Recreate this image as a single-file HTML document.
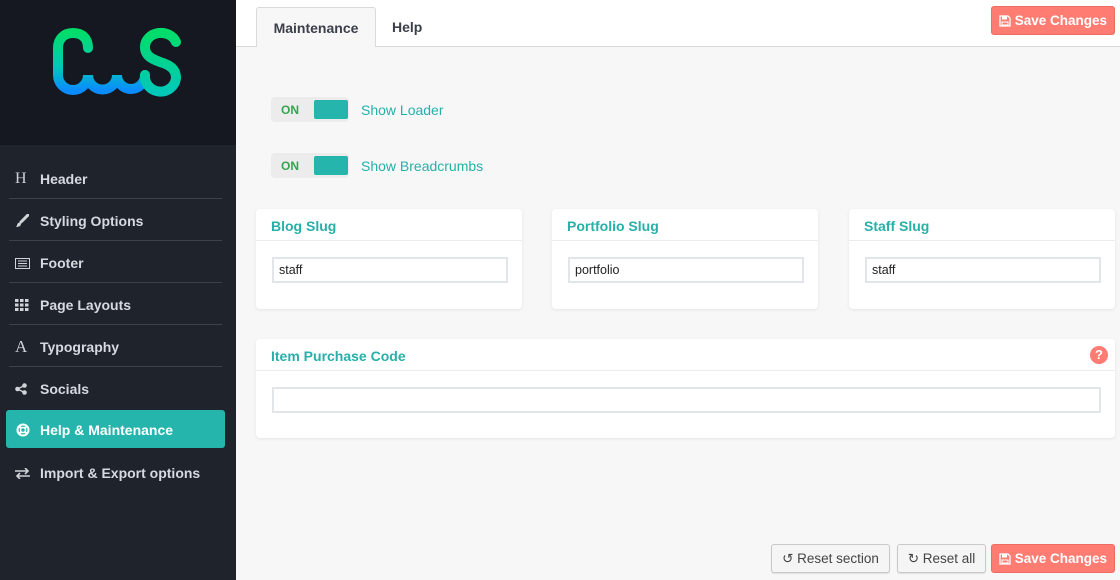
<!DOCTYPE html>
<html><head><meta charset="utf-8"><style>
*{box-sizing:border-box;margin:0;padding:0}
body{width:1120px;height:580px;overflow:hidden;font-family:"Liberation Sans",sans-serif;background:#f7f7f7;position:relative}
.side{position:absolute;left:0;top:0;width:236px;height:580px;background:#1f232b}
.logo{position:absolute;left:0;top:0;width:236px;height:145px;background:#151820}
.nav{position:absolute;left:9px;width:213px;height:42px;border-bottom:1px solid #3d4149;color:#d6d9df;font-size:14px;font-weight:bold;line-height:44px;padding-left:31px}
.nav .ic{position:absolute;left:6px;top:0;width:18px;text-align:left;color:#d0d3d8;font-size:14px}
.nav.act{left:6px;width:219px;background:#26b5ad;color:#fff;border:none;border-radius:3px;height:38px;line-height:40px;padding-left:34px}
.top{position:absolute;left:236px;top:0;width:884px;height:47px;background:#fff;border-bottom:1px solid #d9d9d9}
.tab{position:absolute;top:7px;height:40px;line-height:41px;font-size:14px;font-weight:bold;color:#3a3f4a}
.btn{position:absolute;border-radius:3px;font-size:13.5px;font-weight:bold;line-height:28px;height:29px;text-align:center}
.btn svg{vertical-align:-2px}
.save{background:#fe7c72;color:#fff;border:1px solid #f06b61}
.gray{background:#f5f5f5;color:#444;border:1px solid #c9c9c9;font-weight:normal;box-shadow:0 1px 1px rgba(0,0,0,.1)}
.tog{position:absolute;left:271px;width:78px;height:25px;background:#ececec;border-radius:4px}
.tog b{position:absolute;left:10px;top:0;line-height:26px;font-size:12px;color:#35a451}
.tog i{position:absolute;left:43px;top:3px;width:34px;height:19px;background:#26b5ad;border-radius:2px}
.tl{position:absolute;left:361px;color:#26b0a8;font-size:14px}
.card{position:absolute;background:#fff;border-radius:4px;box-shadow:0 1px 3px rgba(0,0,0,.08)}
.card h3{height:32px;border-bottom:1px solid #ececec;color:#26b0a8;font-size:14px;line-height:35px;padding-left:15px}
.inp{position:absolute;left:16px;top:48px;height:26px;border:2px solid #e2e6ea;background:#fff;font-size:12.5px;line-height:23px;padding-left:5px;color:#222}
</style></head><body>
<div class="side">
<div class="logo">
<svg width="236" height="145" viewBox="0 0 236 145">
<defs><linearGradient id="g" x1="0" y1="0" x2="0" y2="1"><stop offset="0" stop-color="#00dd6a"/><stop offset=".6" stop-color="#00c8b8"/><stop offset="1" stop-color="#0a8cff"/></linearGradient>
<linearGradient id="g2" x1="0" y1="0" x2="0" y2="1"><stop offset="0" stop-color="#00dd6a"/><stop offset="1" stop-color="#00c8b8"/></linearGradient></defs>
<g fill="none" stroke-width="10" stroke-linecap="round">
<path d="M88 48 C88 38 82 33 73 33 C64 33 58 39 58 48 V75 A15 15 0 0 0 88 75 A14.5 14.5 0 0 0 117 75 A14 14 0 0 0 145 75" stroke="url(#g)"/>
<path d="M176 42 A16 14 0 0 0 145 47 C145 56 152 59 160 62 C170 65 176 69 176 78 A15.5 15 0 0 1 145 75" stroke="url(#g2)"/>
</g></svg>
</div>
<div class="nav" style="top:157px"><span class="ic" style="font-family:'Liberation Serif';font-size:16px;font-weight:normal">H</span>Header</div>
<div class="nav" style="top:199px"><span class="ic"><svg width="14" height="14" style="vertical-align:-2px"><path d="M13 1L6 8" stroke="#d0d3d8" stroke-width="3" stroke-linecap="round"/><path d="M5 8.5c-2 0-3 1.5-3 3L1 13c3 0 5-1 5-3.5z" fill="#d0d3d8"/></svg></span>Styling Options</div>
<div class="nav" style="top:241px"><span class="ic"><svg width="15" height="11" style="vertical-align:-1px"><rect x=".5" y=".5" width="14" height="10" fill="none" stroke="#d0d3d8"/><path d="M3 3h9M3 5.5h9M3 8h9" stroke="#d0d3d8"/></svg></span>Footer</div>
<div class="nav" style="top:283px"><span class="ic"><svg width="14" height="12" style="vertical-align:-1px" fill="#d0d3d8"><rect x="0" y="0" width="3.5" height="3"/><rect x="5" y="0" width="3.5" height="3"/><rect x="10" y="0" width="3.5" height="3"/><rect x="0" y="4.5" width="3.5" height="3"/><rect x="5" y="4.5" width="3.5" height="3"/><rect x="10" y="4.5" width="3.5" height="3"/><rect x="0" y="9" width="3.5" height="3"/><rect x="5" y="9" width="3.5" height="3"/><rect x="10" y="9" width="3.5" height="3"/></svg></span>Page Layouts</div>
<div class="nav" style="top:325px"><span class="ic" style="font-family:'Liberation Serif';font-size:17px;font-weight:normal">A</span>Typography</div>
<div class="nav" style="top:367px;border:none"><span class="ic"><svg width="12" height="12" style="vertical-align:-1px"><circle cx="9.5" cy="2.5" r="2.3" fill="#d0d3d8"/><circle cx="2.5" cy="6" r="2.3" fill="#d0d3d8"/><circle cx="9.5" cy="9.5" r="2.3" fill="#d0d3d8"/><path d="M9.5 2.5L2.5 6L9.5 9.5" stroke="#d0d3d8" stroke-width="1.3" fill="none"/></svg></span>Socials</div>
<div class="nav act" style="top:410px"><span class="ic" style="left:10px"><svg width="14" height="14" style="vertical-align:-2px"><circle cx="7" cy="7" r="5.5" fill="none" stroke="#fff" stroke-width="2"/><circle cx="7" cy="7" r="2.5" fill="none" stroke="#fff" stroke-width="1.5"/><path d="M3 3l2.5 2.5M11 3L8.5 5.5M3 11l2.5-2.5M11 11L8.5 8.5" stroke="#fff" stroke-width="2"/></svg></span>Help &amp; Maintenance</div>
<div class="nav" style="top:451px;border:none"><span class="ic"><svg width="15" height="11" style="vertical-align:-1px" fill="none" stroke="#d0d3d8" stroke-width="1.6"><path d="M0 3h13M10 0l3 3-3 3M15 8H2M5 5L2 8l3 3"/></svg></span>Import &amp; Export options</div>
</div>
<div class="top">
<div class="tab" style="left:20px;width:120px;background:#f7f7f7;border:1px solid #d9d9d9;border-bottom:none;border-radius:3px 3px 0 0;text-align:center">Maintenance</div>
<div class="tab" style="left:156px">Help</div>
</div>
<div class="btn save" style="left:991px;top:6px;width:124px"><svg width="12" height="12"><path d="M1 1h8l2 2v8H1z" fill="none" stroke="#fff" stroke-width="1.3"/><rect x="3" y="1.5" width="5" height="3" fill="#fff"/><rect x="3" y="7" width="6" height="3" fill="none" stroke="#fff"/></svg> Save Changes</div>
<div class="tog" style="top:97px"><b>ON</b><i></i></div><div class="tl" style="top:102px">Show Loader</div>
<div class="tog" style="top:153px"><b>ON</b><i></i></div><div class="tl" style="top:158px">Show Breadcrumbs</div>
<div class="card" style="left:256px;top:209px;width:266px;height:100px"><h3>Blog Slug</h3><div class="inp" style="width:236px">staff</div></div>
<div class="card" style="left:552px;top:209px;width:266px;height:100px"><h3>Portfolio Slug</h3><div class="inp" style="width:236px">portfolio</div></div>
<div class="card" style="left:849px;top:209px;width:266px;height:100px"><h3>Staff Slug</h3><div class="inp" style="width:236px">staff</div></div>
<div class="card" style="left:256px;top:339px;width:859px;height:99px"><h3>Item Purchase Code</h3><div class="inp" style="width:829px"></div>
<div style="position:absolute;left:834px;top:7px;width:18px;height:18px;border-radius:50%;background:#fe7c72;color:#fff;font-size:13px;font-weight:bold;text-align:center;line-height:18px">?</div></div>
<div class="btn gray" style="left:771px;top:544px;width:119px">&#x21BA; Reset section</div>
<div class="btn gray" style="left:897px;top:544px;width:89px">&#x21BB; Reset all</div>
<div class="btn save" style="left:991px;top:544px;width:124px"><svg width="12" height="12"><path d="M1 1h8l2 2v8H1z" fill="none" stroke="#fff" stroke-width="1.3"/><rect x="3" y="1.5" width="5" height="3" fill="#fff"/><rect x="3" y="7" width="6" height="3" fill="none" stroke="#fff"/></svg> Save Changes</div>
</body></html>
